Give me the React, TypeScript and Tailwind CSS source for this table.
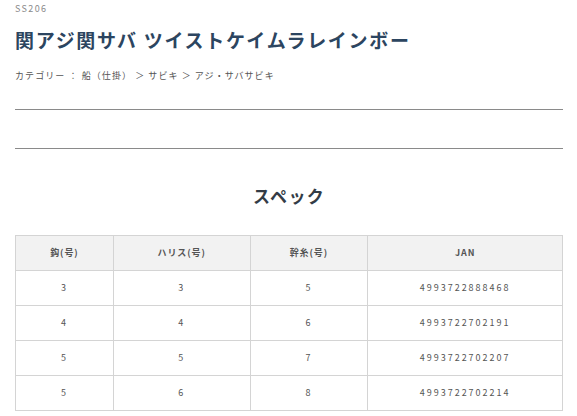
import React from "react";

const rows = [
  ["3", "3", "5", "4993722888468"],
  ["4", "4", "6", "4993722702191"],
  ["5", "5", "7", "4993722702207"],
  ["5", "6", "8", "4993722702214"],
];

export default function App() {
  return (
    <div
      className="w-[577px] h-[416px] overflow-hidden bg-white px-[15px]"
      style={{ fontFamily: '"Noto Sans CJK JP", "Noto Sans", sans-serif' }}
    >
      <div className="pt-[3px] text-[9px] leading-[12px] tracking-[0.15em] text-[#8a8a8a]">SS206</div>
      <h1 className="mt-[13px] text-[19px] leading-[24px] font-bold tracking-[0.09em] text-[#2c4560]">
        関アジ関サバ ツイストケイムラレインボー
      </h1>
      <div className="mt-[18px] text-[9px] leading-[12px] tracking-[0.12em] text-[#555]">
        カテゴリー ： 船（仕掛） ＞ サビキ ＞ アジ・サバサビキ
      </div>
      <div className="mt-[27px] w-[548px] border-t border-[#8a8a8a]" />
      <div className="mt-[38px] w-[548px] border-t border-[#8a8a8a]" />
      <h2 className="mt-[35px] w-[548px] text-center text-[17px] leading-[24px] font-bold tracking-[0.08em] text-[#333c46]">
        スペック
      </h2>
      <table className="mt-[27px] w-[548px] border-collapse text-[9px] text-[#555]">
        <colgroup>
          <col className="w-[98px]" />
          <col className="w-[137px]" />
          <col className="w-[118px]" />
          <col className="w-[195px]" />
        </colgroup>
        <thead>
          <tr className="h-[35px] bg-[#f2f2f2]">
            {["鈎(号)", "ハリス(号)", "幹糸(号)", "JAN"].map((h) => (
              <th key={h} className="border border-[#d4d4d4] font-bold tracking-[0.1em] text-[#555] text-center">
                {h}
              </th>
            ))}
          </tr>
        </thead>
        <tbody>
          {rows.map((r, i) => (
            <tr key={i} className="h-[35px]">
              {r.map((c, j) => (
                <td key={j} className="border border-[#d4d4d4] text-center tracking-[0.22em] text-[#555]">
                  {c}
                </td>
              ))}
            </tr>
          ))}
        </tbody>
      </table>
    </div>
  );
}
